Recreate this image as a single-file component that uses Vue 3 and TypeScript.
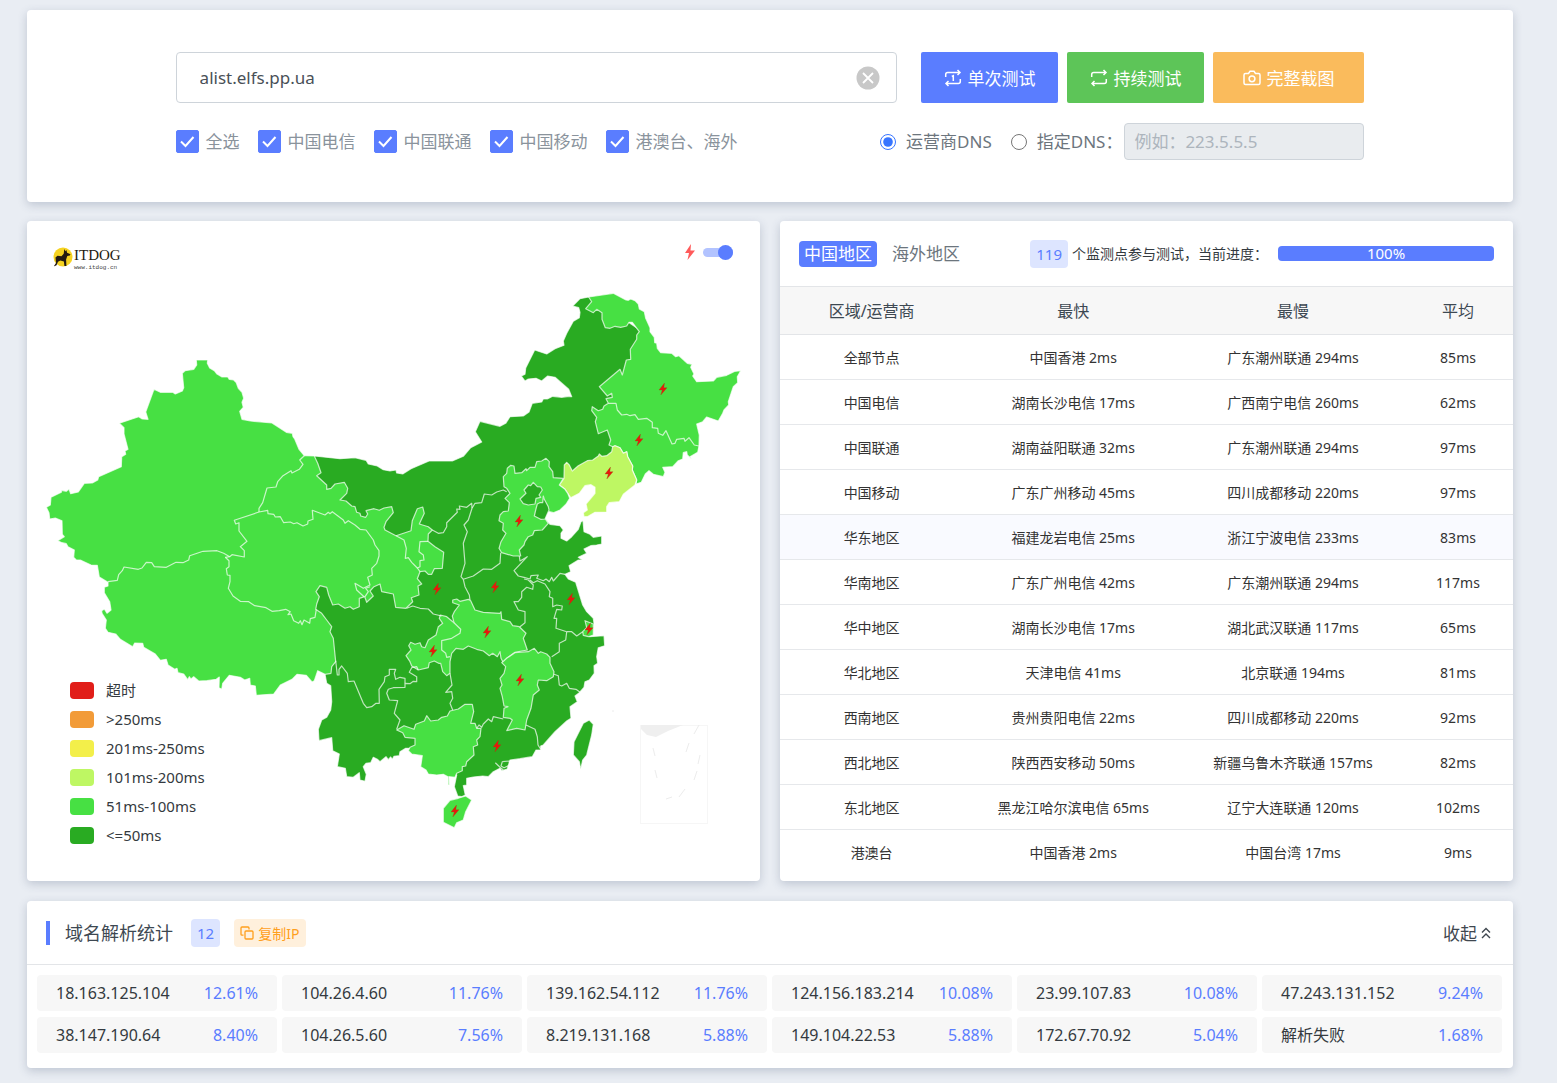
<script setup lang="ts">
import { computed, ref } from 'vue'

interface Carrier { id: string; name: string; on: boolean }
interface RegionRow { area: string; fastest: string; slowest: string; average: string }
interface ResolveItem { ip: string; share: string }
type Sheet = 'west' | 'north' | 'east' | 'centre' | 'south'
type Piece = [Sheet, string]

const host = ref('alist.elfs.pp.ua')
const dnsMode = ref('isp')
const customDns = ref('')
const showBolts = ref(true)

const carriers = ref<Carrier[]>([
  { id: 'all', name: '全选', on: true },
  { id: 'telecom', name: '中国电信', on: true },
  { id: 'unicom', name: '中国联通', on: true },
  { id: 'mobile', name: '中国移动', on: true },
  { id: 'overseas', name: '港澳台、海外', on: true },
])

const rows: RegionRow[] = [
  { area: '全部节点', fastest: '中国香港 2ms', slowest: '广东潮州联通 294ms', average: '85ms' },
  { area: '中国电信', fastest: '湖南长沙电信 17ms', slowest: '广西南宁电信 260ms', average: '62ms' },
  { area: '中国联通', fastest: '湖南益阳联通 32ms', slowest: '广东潮州联通 294ms', average: '97ms' },
  { area: '中国移动', fastest: '广东广州移动 45ms', slowest: '四川成都移动 220ms', average: '97ms' },
  { area: '华东地区', fastest: '福建龙岩电信 25ms', slowest: '浙江宁波电信 233ms', average: '83ms' },
  { area: '华南地区', fastest: '广东广州电信 42ms', slowest: '广东潮州联通 294ms', average: '117ms' },
  { area: '华中地区', fastest: '湖南长沙电信 17ms', slowest: '湖北武汉联通 117ms', average: '65ms' },
  { area: '华北地区', fastest: '天津电信 41ms', slowest: '北京联通 194ms', average: '81ms' },
  { area: '西南地区', fastest: '贵州贵阳电信 22ms', slowest: '四川成都移动 220ms', average: '92ms' },
  { area: '西北地区', fastest: '陕西西安移动 50ms', slowest: '新疆乌鲁木齐联通 157ms', average: '82ms' },
  { area: '东北地区', fastest: '黑龙江哈尔滨电信 65ms', slowest: '辽宁大连联通 120ms', average: '102ms' },
  { area: '港澳台', fastest: '中国香港 2ms', slowest: '中国台湾 17ms', average: '9ms' },
]
const activeRow = '华东地区'

const resolved: ResolveItem[] = [
  { ip: '18.163.125.104', share: '12.61%' },
  { ip: '104.26.4.60', share: '11.76%' },
  { ip: '139.162.54.112', share: '11.76%' },
  { ip: '124.156.183.214', share: '10.08%' },
  { ip: '23.99.107.83', share: '10.08%' },
  { ip: '47.243.131.152', share: '9.24%' },
  { ip: '38.147.190.64', share: '8.40%' },
  { ip: '104.26.5.60', share: '7.56%' },
  { ip: '8.219.131.168', share: '5.88%' },
  { ip: '149.104.22.53', share: '5.88%' },
  { ip: '172.67.70.92', share: '5.04%' },
  { ip: '解析失败', share: '1.68%' },
]

const levels = [
  { label: '超时', color: '#e11e19' },
  { label: '>250ms', color: '#f29b38' },
  { label: '201ms-250ms', color: '#f3ef4a' },
  { label: '101ms-200ms', color: '#bef763' },
  { label: '51ms-100ms', color: '#47e043' },
  { label: '<=50ms', color: '#29ab22' },
]
const LIGHT = '#47e043'
const DARK = '#29ab22'
const LIME = '#bef763'

// Outlines are stored per sheet, three units to one map unit.
const origins: Record<Sheet, [number, number]> = {
  west: [0, 119],
  north: [273, 59],
  east: [473, 59],
  centre: [273, 259],
  south: [273, 419],
}

function trace(...pieces: Piece[]): string {
  return pieces
    .flatMap(([sheet, list]) => {
      const [ox, oy] = origins[sheet]
      return list.split(' ').map((pair) => {
        const [x, y] = pair.split(',').map(Number)
        return `${(ox + x / 3).toFixed(1)},${(oy + y / 3).toFixed(1)}`
      })
    })
    .join(' ')
}

const fastLand = trace(
  ['north', '43,528 120,536 165,533 198,541 205,552 232,558 250,569 270,573 288,570 290,579 308,582 333,566 387,543 457,543 490,529 512,503 545,486 526,455 540,424 600,439 617,430 630,410 670,408 687,396 697,370 725,366 730,357'],
  ['east', '142,357 158,349 185,352 207,349 215,350 206,328 165,292 143,288 125,303 108,295 85,297 75,303 64,288 75,283 77,264 104,210 140,222 165,206 192,196 190,183 200,160 220,124 238,113 240,97 236,83 218,78 240,56 266,51 300,70 420,150 440,300 375,540 300,590 192,605 160,645 140,650 147,690 135,715'],
  ['centre', '750,133 780,137 790,150 783,160 783,175 800,183 815,170 835,148 843,125 849,122 852,155 870,163 880,172 905,168 905,192 890,195 872,197 852,207 860,220 835,232 847,240 835,240 807,257 812,275 795,283 805,297 827,307 848,375 860,395 880,415 882,430 880,460 868,470 912,467 914,497 895,503 890,530 893,550 882,557 883,580 868,600'],
  ['south', '855,125 852,142 838,158 825,168 832,185 810,200 813,235 800,243 765,275 730,315 722,318 722,330 708,330 697,350 660,356 630,360 622,387 605,392 600,385 580,395 565,410 548,408 520,411 500,415 500,435 490,437 496,465 485,470 473,468 463,440 470,405 440,380 370,340 328,325 317,325 300,335 298,347 282,349 277,358 272,351 265,359 258,350 240,365 232,358 220,352 212,368 198,370 190,380 199,403 195,424 180,420 178,398 160,412 140,410 136,385 112,380 118,342 98,332 95,293 57,302 55,268 65,240 80,232 92,210 95,185 92,137 80,130 75,103'],
  ['centre', '60,560 60,450 20,380 20,150'],
  ['north', '20,560'],
)

const westLand = trace(
  ['west', '508,60 542,60 541,70 548,84 562,92 570,102 585,111 602,111 607,118 620,120 628,128 634,145 645,157 650,175 645,187 649,202 638,214 645,238 670,243 735,249 778,277 796,280 798,290 803,297 816,328 832,347 862,348'],
  ['north', '53,550 63,578 50,587 80,615 80,628 93,625 105,612 133,607 143,625 140,640 120,660 138,663 155,678 165,680 170,697 180,700 182,708 197,712 203,702 198,692 222,686 238,691 252,684 275,680 280,698 258,725 252,742 255,750 288,767 333,752 337,722 352,686 368,681 373,700 358,732 385,740 397,750 385,762 384,784'],
  ['centre', '405,200 431,217 427,265 403,266 395,283 385,283 375,273 360,275 352,296 365,312 354,318 357,345 334,353 338,365 318,385 287,382 280,342 245,335 240,312 222,320 210,333 220,348 200,367 194,350 178,355 178,380 160,388 150,380 135,385 115,372 98,375 86,345 80,322 60,317 48,335 58,350 50,372 47,388 65,400 80,420 95,440 90,455 100,475 107,545 95,560 93,580 75,583'],
  ['west', '872,992 862,1022 855,1026 838,1006 810,1003 795,1018 760,1035 740,1062 688,1066 685,1038 670,1035 668,1015 653,1020 640,1012 607,1006 587,1030 584,1048 576,1043 577,1011 568,1018 540,1022 515,1023 500,1010 492,1017 487,1010 482,1019 470,1002 453,998 450,985 443,988 423,975 418,958 400,961 385,942 350,922 347,910 323,909 317,920 280,898 266,882 243,877 235,865 238,840 225,820 224,812 232,807 240,820 252,810 248,785 232,758 232,742 243,738 243,727 217,711 211,676 192,675 160,660 148,660 140,652 142,630 123,620 118,611 105,608 92,602 112,590 106,583 105,542 85,534 68,537 66,518 58,502 70,495 72,472 103,457 104,451 118,454 126,447 131,461 154,456 172,430 196,429 212,420 215,410 283,380 284,350 296,343 294,333 303,328 291,282 291,263 277,250 335,230 346,237 363,238 356,216 381,148 400,157 437,157 445,162 466,153 470,143 466,100 474,92 500,88 509,75'],
)

const regions = [
  { name: 'west', color: LIGHT, points: westLand },
  {
    name: 'northeast',
    color: LIGHT,
    points: trace(['east', '266,51 340,40 378,60 385,61 392,57 405,62 415,72 418,87 433,95 437,115 450,143 450,155 463,172 464,188 470,190 472,205 482,218 515,220 527,230 537,227 562,250 576,253 572,262 582,282 578,288 590,305 640,303 650,292 680,286 705,274 722,272 712,290 713,308 700,320 685,365 686,375 672,390 668,400 655,423 620,411 608,425 590,432 598,465 597,498 593,517 570,530 575,538 562,525 560,515 550,518 548,537 535,542 518,560 488,562 495,577 490,590 460,583 447,572 436,582 424,607 408,612 410,600 397,570 398,558 383,530 380,515 370,520 360,503 345,497 338,500 327,495 332,480 322,450 295,461 286,425 290,412 275,392 277,380 295,392 308,388 312,378 325,370 318,356 337,352 335,340 322,348 298,320 360,268 367,285 379,240 392,238 391,208 410,178 410,165 418,155 397,127 387,127 380,138 362,142 345,139 330,145 316,143 306,118 306,98 290,88 280,98 257,86 275,65']),
  },
  {
    name: 'liaoning',
    color: LIME,
    points: trace(['east', '345,497 360,503 370,520 380,515 383,530 398,558 397,570 410,600 405,615 370,643 358,665 328,668 320,680 320,696 285,697 262,710 252,710 250,698 262,690 258,672 285,640 285,622 273,614 255,617 238,640 212,653 203,640 195,628 178,615 192,595 193,555 200,547 208,555 217,573 235,557 262,542 278,540 295,528 298,522 305,529 320,527 335,515 338,500']),
  },
  {
    name: 'hebei',
    color: LIGHT,
    points: trace(
      ['east', '160,593 190,595 178,615 195,628 203,640 209,655 198,673 180,690 160,698 148,695 140,700 135,715 145,730 127,750 103,752 98,765 85,770 75,785'],
      ['centre', '672,195 658,210 662,228 640,228 605,218 597,205 603,185 618,160 608,150 610,130 597,122 600,105 610,95 625,93 628,68 615,55 630,40 620,25'],
      ['north', '612,620 610,590 620,580 622,565 632,556 642,558 645,580 665,578 678,566 680,572 690,562 705,562 710,545 725,543 738,535'],
      ['east', '148,545 147,560 158,575'],
    ),
  },
  { name: 'beijing', color: DARK, points: trace(['north', '700,607 692,617 685,615 672,630 678,640 660,657 670,671 685,675 705,672 708,655 722,652 717,645 727,630 722,621 712,620']) },
  { name: 'tianjin', color: DARK, points: trace(['east', '130,648 128,668 119,668 112,672 107,690 103,708 122,718 135,717 147,690 145,680 133,658']) },
  {
    name: 'hubei-chongqing',
    color: LIGHT,
    points: trace(['centre', '458,360 470,357 480,364 505,358 512,362 525,390 550,397 600,400 603,395 605,418 630,425 638,437 658,440 678,460 670,475 682,510 665,513 645,517 620,535 610,548 603,535 600,515 592,530 578,520 568,527 550,513 530,508 505,498 490,508 468,505 455,520 450,545 450,580 440,587 428,575 422,550 416,550 403,543 388,548 385,563 355,570 335,558 330,545 318,527 333,510 326,497 332,487 345,493 360,488 365,500 375,503 385,480 408,465 415,440 428,430 418,415 421,405 440,410 462,428 457,408 463,395 478,375 458,368']),
  },
  {
    name: 'jiangxi',
    color: LIGHT,
    points: trace(['south', '605,68 620,55 645,38 685,35 703,25 715,40 722,35 740,42 750,52 750,70 762,95 760,110 740,122 715,120 712,135 718,150 700,165 693,205 680,240 675,270 650,265 620,272 637,240 630,235 610,232 612,205 624,200 612,198 607,170 600,145 606,135 600,115 612,100 617,80']),
  },
  {
    name: 'guangxi',
    color: LIGHT,
    points: trace(['south', '290,270 312,257 342,268 347,253 373,243 380,227 392,243 415,240 425,232 442,228 450,213 475,207 495,193 517,193 521,215 512,250 525,250 530,265 543,265 540,290 530,300 533,315 520,320 522,345 500,365 497,378 487,380 487,392 470,400 465,412 447,410 448,435 444,434 444,410 430,403 410,405 385,402 378,390 362,380 367,347 335,342 325,332 330,322 345,315 345,295 315,292 308,278']),
  },
  { name: 'hainan', color: LIGHT, points: trace(['south', '515,480 497,468 475,475 450,481 430,505 430,547 463,563 470,548 490,540 497,515']) },
  { name: 'shanghai', color: LIGHT, points: trace(['centre', '855,422 880,432 880,465 865,470 850,466 848,455 860,443']) },
  { name: 'taiwan', color: DARK, points: trace(['south', '868,240 880,253 875,285 860,345 848,360 842,388 838,365 820,345 822,305 850,250']) },
]

const borders = [
  trace(['west', '832,347 818,360 828,373 817,388 795,399 792,392 768,407 752,425 747,441 720,444 707,488 696,505 696,516']),
  trace(['west', '696,516 622,541 626,552 636,548 636,573 660,604 640,620 652,632 652,651 615,644 608,650 595,652']),
  trace(['west', '608,650 590,640 570,632 528,634 488,647 485,660 468,668 447,667 418,682 382,680 374,668 358,667 345,684 334,688 291,681 286,692 275,704 271,721 243,725']),
  trace(['west', '595,652 606,662 606,680 598,686 601,705 609,706 609,725 604,745 618,768 640,784 665,785 683,797 717,803 735,814 757,812 776,808 790,815 783,824 792,822 800,842 815,850 820,842 825,854 831,840 848,850 850,836 864,832 868,808']),
  trace(
    ['west', '696,516 722,511 723,521 740,523 745,531 760,530 770,548 790,546 800,551 810,548 828,558 842,552 843,543 858,538 856,511'],
    ['north', '75,705 85,697 90,701 97,695 130,720 135,730 145,722 165,735 180,748 198,750 220,780 225,795 237,812'],
    ['centre', '237,228 230,250 215,265 217,285 203,292 210,315 190,325 165,310 170,330 192,350'],
  ),
  trace(['centre', '210,320 197,325 205,335 195,350']),
  trace(['centre', '288,167 312,180 319,205 316,235 325,233 335,247 352,264 360,260 360,242 372,240 370,225 357,215 360,185 384,184']),
  trace(['centre', '352,264 360,275']),
  trace(['east', '325,370 348,370 352,390 365,405 380,403 390,407 405,404 415,418 440,415 457,427 457,443 473,445 475,460 488,466 498,452 516,492 525,490 530,478 552,475 555,484 567,473 583,495 597,498']),
  trace(['centre', '397,150 415,160 430,158 440,140 440,128 472,97 470,87 480,88 478,78 500,82 515,70 516,85']),
  trace(['centre', '516,85 525,70 545,68 553,42 575,45 590,36 610,30 620,35']),
  trace(['centre', '516,85 505,120 492,135 502,155 490,190 495,250 483,290 490,298']),
  trace(['centre', '490,298 520,288 550,267 575,268 600,250 602,218']),
  trace(['centre', '490,298 495,320 508,345 510,360']),
  trace(['centre', '320,385 338,378 360,385 385,387 400,402 425,408']),
  trace(['centre', '658,228 660,243 682,230 642,272 655,288 672,292 690,297']),
  trace(['centre', '690,297 693,287 715,285 710,295 730,302 738,297 748,305 755,292 760,303 780,280 795,283']),
  trace(['centre', '672,297 685,300 700,315 698,328 680,322 665,335 665,352 655,365 642,365 655,390 675,395 675,428 660,440']),
  trace(['centre', '690,300 700,308 712,302 735,312 750,335 748,350 758,355 758,380 770,375 787,378 785,390 770,388 762,415 770,415 768,445 800,455']),
  trace(['centre', '800,455 815,455 830,468 848,455']),
  trace(['centre', '800,455 797,480 778,490 778,515 755,530']),
  trace(['centre', '462,428 482,448 480,460 455,475 425,482 425,510 437,520 440,532 450,530']),
  trace(['south', '762,103 775,107 778,135 785,138 800,130 808,145 828,148 842,158']),
  trace(['south', '678,255 705,268 712,290 714,315 722,328']),
  trace(['south', '530,265 537,255 545,262 550,252 565,237 575,245 580,230 610,237']),
  trace(['south', '450,100 456,135 437,157 455,155 458,175 450,190 458,210']),
  trace(['south', '355,90 350,80 335,83 328,97 350,110 350,125 340,124 330,131 315,130 315,142 280,143 265,148 260,160 268,180 293,182 283,220 300,240 290,268']),
  trace(['south', '107,62 112,105 117,105 117,88 125,78 142,100 145,125 162,123 190,190 200,203 215,200 228,190 238,190 237,148 253,125 255,110 268,105 268,88 287,88 283,100 287,118 300,112 315,115 315,130']),
  trace(['south', '607,365 628,363 630,375 612,383 603,378 607,365']),
  trace(['south', '586,368 600,382 610,390']),
]

const bolts = [
  [636, 168], [612, 219], [582, 252], [492, 300], [468, 366], [410, 368], [544, 378],
  [562, 408], [460, 411], [406, 430], [493, 459], [470, 525], [428, 590],
]
const pins = computed(() => (showBolts.value ? bolts : []))
</script>

<template>
  <main class="page">
    <section class="card query">
      <form class="query-inner" @submit.prevent>
        <div class="query-row">
          <div class="host">
            <input v-model="host" class="host-input" type="text" aria-label="域名" />
            <button class="clear" type="button" aria-label="清空" @click="host = ''">
              <svg viewBox="0 0 24 24" width="24" height="24">
                <circle cx="12" cy="12" r="11.5" fill="#c8c8c8" />
                <path d="M7 7l10 10M17 7L7 17" stroke="#fff" stroke-width="1.8" />
              </svg>
            </button>
          </div>
          <div class="actions">
            <button class="btn blue" type="button">
              <svg class="ico" viewBox="0 0 18 18">
                <path d="M1.700 8V5.600q0-2 2-2H16M13.500 1L16 3.600 13.500 6M16.300 10v2.400q0 2-2 2H2M4.500 12L2 14.400 4.500 17M7.800 7.500L9.300 6.700V12" />
              </svg>
              单次测试
            </button>
            <button class="btn green" type="button">
              <svg class="ico" viewBox="0 0 18 18">
                <path d="M1.700 8V5.600q0-2 2-2H16M13.500 1L16 3.600 13.500 6M16.300 10v2.400q0 2-2 2H2M4.500 12L2 14.400 4.500 17" />
              </svg>
              持续测试
            </button>
            <button class="btn orange" type="button">
              <svg class="ico" viewBox="0 0 18 18">
                <path d="M2.500 4.500h3L7 2.300h4l1.500 2.200h3q1.500 0 1.500 1.500v8q0 1.500-1.500 1.500h-13Q1 15.500 1 14V6q0-1.500 1.500-1.500z" />
                <circle cx="9" cy="9.800" r="2.900" />
              </svg>
              完整截图
            </button>
          </div>
        </div>
        <div class="query-row options">
          <div class="checks">
            <label v-for="c in carriers" :key="c.id" class="check">
              <input v-model="c.on" type="checkbox" />
              <span>{{ c.name }}</span>
            </label>
          </div>
          <div class="dns">
            <label class="radio"><input v-model="dnsMode" type="radio" name="dns" value="isp" /><span>运营商DNS</span></label>
            <label class="radio"><input v-model="dnsMode" type="radio" name="dns" value="custom" /><span>指定DNS：</span></label>
            <input v-model="customDns" class="dns-input" type="text" placeholder="例如：223.5.5.5" aria-label="指定DNS" :disabled="dnsMode === 'isp'" />
          </div>
        </div>
      </form>
    </section>

    <div class="columns">
      <section class="card map-card">
        <svg class="map" viewBox="0 0 733 660" role="img" aria-label="中国地区延迟分布">
          <g class="logo">
            <circle cx="36" cy="36" r="9.500" fill="#f6d321" />
            <path d="M27 45l2-3-.5-5.500 2-1.700 4 .4 2.200-2.500 .6-4.700 1.200 2.300 .9-1.200 .7 2.700 3.400 1.500-.7 1.300-2.500 .4-1.200 3.500 .3 6.500h-2l-.5-4.500-3.500-1-2.400 1.200-1.500 3.500-2 1z" fill="#231a10" />
            <text x="47" y="39" class="logo-name">ITDOG</text>
            <text x="47" y="48" class="logo-url">www.itdog.cn</text>
          </g>
          <g class="land">
            <polygon :points="fastLand" fill="#29ab22" />
            <polygon v-for="r in regions" :key="r.name" :points="r.points" :fill="r.color" />
            <polyline v-for="(b, i) in borders" :key="i" :points="b" fill="none" />
          </g>
          <g class="inset">
            <rect x="613.500" y="504.500" width="67" height="98" fill="none" stroke="#f6f6f6" />
            <path d="M614 504h42l-15 6-12 6-9-2-6-6z" fill="#efefef" />
            <path d="M672 504l-5 9M662 522l-3 9M673 534l-2 9M626 527l2 8M628 549l2 8M670 550l-3 9M658 568l-6 8M645 576l-6 2M585 490h2" fill="none" stroke="#ececec" />
          </g>
          <path v-for="(p, i) in pins" :key="i" :transform="`translate(${p[0]} ${p[1]})`" d="M1.500-6L-4 1h3.300L-2.200 6 4-1.300H.8z" fill="#e9180c" stroke="#8a5a10" stroke-width=".3" />
        </svg>
        <label class="bolt-toggle">
          <svg viewBox="0 0 10 16" width="10" height="16" aria-hidden="true"><path d="M6 0L0 9h4L2.500 16 10 6.500H5.500z" fill="#ff5a5a" /></svg>
          <input v-model="showBolts" type="checkbox" aria-label="显示标记" />
        </label>
        <ul class="legend">
          <li v-for="l in levels" :key="l.label"><i :style="{ background: l.color }"></i>{{ l.label }}</li>
        </ul>
      </section>

      <section class="card">
        <header class="result-head">
          <nav class="tabs">
            <button class="tab active" type="button">中国地区</button>
            <button class="tab" type="button">海外地区</button>
          </nav>
          <div class="progress-line">
            <span class="badge">119</span>
            <span class="note">个监测点参与测试，当前进度：</span>
            <div class="bar" role="progressbar" aria-valuenow="100">100%</div>
          </div>
        </header>
        <table class="result">
          <colgroup><col class="c25" /><col class="c30" /><col class="c30" /><col class="c15" /></colgroup>
          <thead>
            <tr><th>区域/运营商</th><th>最快</th><th>最慢</th><th>平均</th></tr>
          </thead>
          <tbody>
            <tr v-for="r in rows" :key="r.area" :class="{ hover: r.area === activeRow }">
              <td>{{ r.area }}</td><td>{{ r.fastest }}</td><td>{{ r.slowest }}</td><td>{{ r.average }}</td>
            </tr>
          </tbody>
        </table>
      </section>
    </div>

    <section class="card">
      <header class="stat-head">
        <span class="accent"></span>
        <h2>域名解析统计</h2>
        <span class="badge">12</span>
        <button class="copy" type="button">
          <svg viewBox="0 0 14 14" width="14" height="14" fill="none" stroke="#ff9f1c" stroke-width="1.300">
            <rect x="5" y="5" width="8" height="8" rx="1" />
            <path d="M3.500 9.200H2q-1 0-1-1V2q0-1 1-1h6q1 0 1 1v1.500" />
          </svg>
          复制IP
        </button>
        <button class="fold" type="button">
          收起
          <svg viewBox="0 0 10 12" width="10" height="12" fill="none" stroke="#3f474f" stroke-width="1.400"><path d="M1 5.500L5 1.500l4 4M1 11l4-4 4 4" /></svg>
        </button>
      </header>
      <ul class="ips">
        <li v-for="r in resolved" :key="r.ip"><span>{{ r.ip }}</span><b>{{ r.share }}</b></li>
      </ul>
    </section>
  </main>
</template>

<style>
body {
  margin: 0;
  background: #e9edf3;
}
</style>

<style scoped>
.page {
  box-sizing: border-box;
  display: flex;
  flex-direction: column;
  gap: 20px;
  padding: 10px 44px 15px 27px;
  font-family: "Noto Sans", "Noto Sans CJK SC", sans-serif;
  font-size: 16px;
  line-height: 24px;
  color: #343a40;
}
.page * {
  box-sizing: border-box;
}
button,
input {
  font-family: inherit;
}
button {
  border: 0;
  padding: 0;
  background: none;
  cursor: pointer;
}
.card {
  position: relative;
  background: #fff;
  border-radius: 4px;
  box-shadow: 0 3px 10px rgba(60, 75, 110, 0.24);
}
.query {
  padding: 42px 0;
  margin-bottom: -1px;
}
.query-inner {
  width: 80%;
  margin: 0 auto;
}
.query-row {
  display: flex;
  align-items: center;
  gap: 24px;
}
.host {
  position: relative;
  flex: 1;
}
.host-input {
  display: block;
  width: 100%;
  height: 51px;
  padding: 0 60px 0 23px;
  border: 1px solid #ced4da;
  border-radius: 4px;
  font-size: 17px;
  color: #495057;
  outline: 0;
}
.clear {
  position: absolute;
  right: 17px;
  top: 14px;
  height: 24px;
}
.clear svg {
  display: block;
}
.actions {
  display: flex;
  gap: 9px;
}
.btn {
  display: flex;
  align-items: center;
  gap: 5px;
  height: 51px;
  padding: 0 23px;
  border-radius: 2px;
  color: #fff;
  font-size: 17px;
}
.ico {
  width: 18px;
  height: 18px;
  fill: none;
  stroke: #fff;
  stroke-width: 1.5;
}
.blue {
  background: #5a7dff;
}
.green {
  background: #5dc558;
}
.orange {
  background: #fabb5c;
  padding: 0 30px;
}
.options {
  justify-content: space-between;
  margin-top: 20px;
  font-size: 17px;
}
.checks {
  display: flex;
  gap: 18px;
  color: #8a939c;
}
.check {
  display: flex;
  align-items: center;
  gap: 7px;
}
.check input {
  appearance: none;
  width: 23px;
  height: 23px;
  margin: 0;
  border: 1px solid #ced4da;
  border-radius: 2px;
}
.check input:checked {
  border-color: #5a7dff;
  background: #5a7dff url("data:image/svg+xml,%3Csvg xmlns='http://www.w3.org/2000/svg' viewBox='0 0 21 21'%3E%3Cpath d='M4 10.500l4.500 4.500 8-9' fill='none' stroke='%23fff' stroke-width='2'/%3E%3C/svg%3E") center / 21px 21px no-repeat;
}
.dns {
  display: flex;
  align-items: center;
  color: #6c757d;
}
.radio {
  display: flex;
  align-items: center;
  gap: 10px;
  margin-right: 19px;
}
.radio + .radio {
  margin-right: 2px;
}
.radio input {
  width: 16px;
  height: 16px;
  margin: 0;
  accent-color: #3875ff;
}
.dns-input {
  width: 240px;
  height: 37px;
  padding: 0 9px;
  border: 1px solid #ced4da;
  border-radius: 4px;
  background: #e9ecef;
  font-size: 17px;
}
.dns-input::placeholder {
  color: #adb5bd;
}
.columns {
  display: grid;
  grid-template-columns: 1fr 1fr;
  gap: 20px;
}
.map {
  display: block;
  width: 100%;
}
.land {
  stroke: rgba(255, 255, 255, 0.7);
  stroke-width: 1.2;
  stroke-linejoin: round;
}
.logo-name {
  font: 15px "Liberation Serif", serif;
  fill: #231a10;
}
.logo-url {
  font: 6px "Liberation Mono", monospace;
  fill: #444;
}
.bolt-toggle {
  position: absolute;
  top: 23px;
  right: 27px;
  display: flex;
  align-items: center;
  gap: 8px;
}
.bolt-toggle input {
  appearance: none;
  display: flex;
  align-items: center;
  width: 30px;
  height: 9px;
  margin: 0;
  border-radius: 5px;
  background: #d5d9e0;
}
.bolt-toggle input::after {
  content: "";
  width: 15px;
  height: 15px;
  flex: none;
  border-radius: 50%;
  background: #5a7dff;
}
.bolt-toggle input:checked {
  justify-content: flex-end;
  background: #b2c3ff;
}
.legend {
  position: absolute;
  left: 43px;
  bottom: 37px;
  display: flex;
  flex-direction: column;
  gap: 12px;
  margin: 0;
  padding: 0;
  list-style: none;
  font-size: 15px;
  line-height: 17px;
}
.legend li {
  display: flex;
  gap: 12px;
}
.legend i {
  width: 24px;
  height: 17px;
  border-radius: 4px;
}
.result-head {
  display: flex;
  align-items: center;
  justify-content: space-between;
  height: 66px;
  padding: 0 19px;
  border-bottom: 1px solid #e3e5e8;
}
.tabs {
  display: flex;
  gap: 10px;
}
.tab {
  height: 26px;
  padding: 0 5px;
  border-radius: 4px;
  color: #6c757d;
  font-size: 17px;
  line-height: 26px;
}
.tab.active {
  background: #5a7dff;
  color: #fff;
}
.progress-line {
  display: flex;
  align-items: center;
  font-size: 14px;
}
.badge {
  padding: 0 6px;
  border-radius: 4px;
  background: #dde5ff;
  color: #5a7dff;
  font-size: 15px;
  line-height: 28px;
}
.note {
  margin: 0 10px 0 4px;
}
.bar {
  width: 216px;
  height: 15px;
  border-radius: 4px;
  background: #5a7dff;
  color: #fff;
  font-size: 15px;
  line-height: 15px;
  text-align: center;
}
.result {
  width: 100%;
  table-layout: fixed;
  border-collapse: separate;
  border-spacing: 0;
  text-align: center;
  font-size: 14px;
}
.c25 {
  width: 25%;
}
.c30 {
  width: 30%;
}
.c15 {
  width: 15%;
}
.result th {
  height: 48px;
  padding: 0;
  border-bottom: 1px solid #e3e5e8;
  background: #f7f7f7;
  font-size: 16px;
  font-weight: 400;
  color: #3d4852;
}
.result td {
  height: 45px;
  padding: 2px 0 0;
  border-bottom: 1px solid #e6e8eb;
  color: #333;
}
.result tr:last-child td {
  padding: 0;
  border-bottom: 0;
}
.hover td {
  background: #f9faff;
}
.stat-head {
  display: flex;
  align-items: center;
  height: 64px;
  padding: 0 22px 0 19px;
  border-bottom: 1px solid #e3e5e8;
}
.accent {
  width: 4px;
  height: 24px;
  margin-right: 15px;
  background: #5a7dff;
}
h2 {
  margin: 0 18px 0 0;
  font-size: 18px;
  font-weight: 400;
  color: #3d4852;
}
.copy {
  display: flex;
  align-items: center;
  gap: 4px;
  height: 28px;
  margin-left: 14px;
  padding: 0 7px 0 6px;
  border-radius: 4px;
  background: #fff0dc;
  color: #ff9f1c;
  font-size: 14px;
}
.fold {
  display: flex;
  align-items: center;
  gap: 4px;
  margin-left: auto;
  color: #3f474f;
  font-size: 17px;
}
.ips {
  display: grid;
  grid-template-columns: repeat(6, 1fr);
  gap: 6px 5px;
  margin: 0;
  padding: 10px 11px 15px 10px;
  list-style: none;
}
.ips li {
  display: flex;
  justify-content: space-between;
  padding: 0 19px;
  border-radius: 4px;
  background: #f7f7f7;
  line-height: 36px;
}
.ips b {
  font-weight: 400;
  color: #5a7dff;
}
</style>
